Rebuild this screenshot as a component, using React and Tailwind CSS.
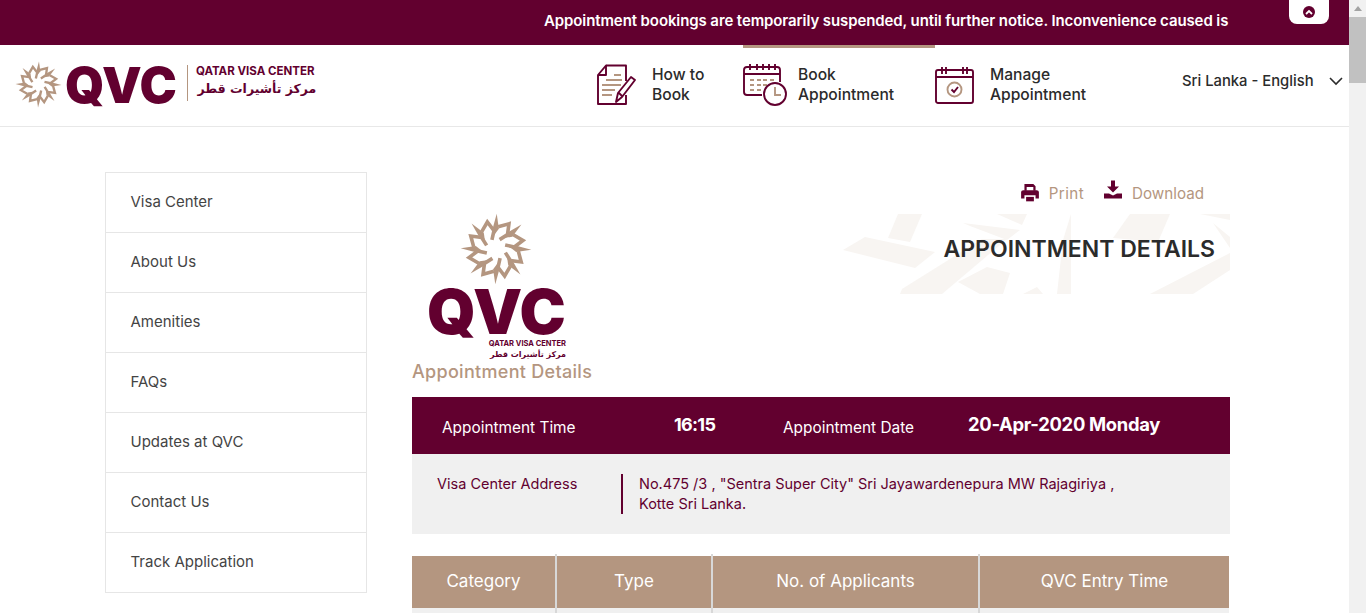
import React from "react";

const M = '"Inter","Open Sans",sans-serif';

function Star({ size }) {
  return (
    <svg width={size} height={size} viewBox="0 0 100 100" fill="none" stroke="#b49680" strokeWidth="5.500" strokeLinejoin="miter">
      {[0, 45, 90, 135, 180, 225, 270, 315].map((a) => (
        <g key={a} transform={`rotate(${a} 50 50)`}>
          <path d="M51 1 L54 22 L48 30 L45 23 Z" fill="#b49680" stroke="none" />
          <path d="M53 19 L68 15 L66 30 L55 37" strokeWidth="5" />
        </g>
      ))}
    </svg>
  );
}

function DocIcon() {
  return (
    <svg width="42" height="42" viewBox="0 0 42 42" fill="none" strokeWidth="1.900">
      <path d="M10 1.500H30V17M30 31V40H2V11L10 1.500V11H2" stroke="#62002f" strokeLinejoin="round" />
      <path d="M18 11H25M10 16H26M6 21H25M6 26H19M6 31H16" stroke="#b49680" />
      <path d="M20 38L22 29L35 13L39 16L26 33Z M23 29L27 33" stroke="#62002f" strokeLinejoin="round" />
    </svg>
  );
}
function CalClock() {
  return (
    <svg width="44" height="44" viewBox="0 0 44 44" fill="none" strokeWidth="1.900">
      <path d="M19 32H4Q1 32 1 29V7Q1 4 4 4H34Q37 4 37 7V19" stroke="#62002f" />
      <path d="M1 11H37M7 1V7M14 1V7M20 1V7M26 1V7M32 1V7" stroke="#62002f" />
      <path d="M7 17H11M14 17H18M20 17H24M27 17H31M7 22H11M14 22H18M20 22H24M7 27H11M14 27H18" stroke="#b49680" />
      <circle cx="32" cy="31" r="11" stroke="#62002f" fill="#fff" />
      <path d="M32 24V32H38" stroke="#b49680" />
    </svg>
  );
}
function CalCheck() {
  return (
    <svg width="40" height="38" viewBox="0 0 40 38" fill="none" strokeWidth="1.900">
      <rect x="1" y="4" width="37" height="33" rx="2" stroke="#62002f" />
      <path d="M1 11H38M7 1V8M11 1V8M28 1V8M32 1V8" stroke="#62002f" />
      <circle cx="19.500" cy="23.500" r="7" stroke="#b49680" />
      <path d="M16.500 23.500L19 26L23 21" stroke="#62002f" />
    </svg>
  );
}

function Nav({ icon, l1, l2, active, iconW }) {
  return (
    <div className={`flex items-center h-[76px] border-t-[3px] ${active ? "border-[#b49680]" : "border-transparent"}`}>
      <div className={`flex justify-start ${iconW}`}>{icon}</div>
      <div className="ml-[11px] text-[15.600px] leading-[20px] font-medium text-[#2b2b2b]">
        <div>{l1}</div>
        <div>{l2}</div>
      </div>
    </div>
  );
}

const side = ["Visa Center", "About Us", "Amenities", "FAQs", "Updates at QVC", "Contact Us", "Track Application"];

const cols = [
  ["Category", "w-[143px]"],
  ["Type", "w-[154px]"],
  ["No. of Applicants", "w-[265px]"],
  ["QVC Entry Time", "flex-1"],
];

export default function App() {
  return (
    <div className="h-[613px] w-[1366px] overflow-hidden flex bg-white" style={{ fontFamily: M }}>
      <div className="flex-1 min-w-0">
        <div className="h-[45px] bg-[#62002f] flex relative">
          <div className="ml-[544px] mt-[10px] text-[15px] leading-[21px] font-semibold tracking-[-0.1px] text-white whitespace-nowrap">
            Appointment bookings are temporarily suspended, until further notice. Inconvenience caused is
          </div>
          <div className="absolute right-[20px] top-0 w-[40px] h-[24px] bg-white rounded-b-[8px] flex items-center justify-center">
            <div className="w-[12px] h-[12px] rounded-full bg-[#62002f] flex items-center justify-center">
              <svg width="8" height="6" viewBox="0 0 8 6" fill="none" stroke="#fff" strokeWidth="1.800"><path d="M1 5L4 2L7 5" /></svg>
            </div>
          </div>
        </div>

        <header className="h-[82px] border-b border-[#e8e8e8] flex relative">
          <div className="ml-[15px] mt-[16px] flex items-start h-[48px]">
            <Star size={47} />
            <div className="ml-[3px] mt-[1px] text-[50px] leading-[46px] font-black text-[#62002f]">QVC</div>
            <div className="ml-[10px] mt-[4px] w-px h-[36px] bg-[#b49680]" />
            <div className="ml-[8px] text-[#62002f] w-[122px]">
              <div className="text-[11.500px] leading-[14px] mt-[3px] font-bold whitespace-nowrap">QATAR VISA CENTER</div>
              <div className="text-[12.500px] leading-[20px] mt-[1px] font-bold whitespace-nowrap text-center" style={{ fontFamily: '"DejaVu Sans",sans-serif' }}>مركز تأشيرات قطر</div>
            </div>
          </div>
          <div className="absolute left-[596px] top-0 flex">
            <div className="w-[147px]"><Nav icon={<DocIcon />} l1="How to" l2="Book" iconW="w-[45px]" /></div>
            <div className="w-[192px]"><Nav icon={<CalClock />} l1="Book" l2="Appointment" active iconW="w-[44px]" /></div>
            <div><Nav icon={<CalCheck />} l1="Manage" l2="Appointment" iconW="w-[44px]" /></div>
          </div>
          <div className="absolute left-[1182px] top-[26px] flex items-center h-[20px] text-[14.800px] font-medium text-[#2b2b2b] whitespace-nowrap">
            Sri Lanka - English
            <svg className="ml-[15px]" width="14" height="9" viewBox="0 0 14 9" fill="none" stroke="#2b2b2b" strokeWidth="1.600"><path d="M1 1L7 7L13 1" /></svg>
          </div>
        </header>

        <div className="flex pl-[105px] pt-[45px]">
          <aside className="w-[262px] h-[421px] border-x border-b border-[#e6e6e6] shrink-0">
            {side.map((s) => (
              <div key={s} className="h-[60px] flex items-center pl-[24.500px] text-[15px] text-[#444] border-t border-[#e6e6e6]">{s}</div>
            ))}
          </aside>

          <main className="ml-[45px] w-[818px]">
            <div className="h-[42px] flex items-start justify-end pr-[26px] pt-[11px] text-[15.200px] text-[#b49680]">
              <svg width="20" height="20" viewBox="0 0 18 18" fill="#62002f"><path d="M4 1H12L14 3V7H12V3.500H6V7H4Z" /><path d="M1 8Q1 6.500 3 6.500H15Q17 6.500 17 8V14H14V11H4V14H1Z" /><path d="M5.500 12.500H12.500V16.500H5.500Z" /></svg>
              <span className="ml-[9px] leading-[21px] tracking-[0.4px]">Print</span>
              <svg className="ml-[19px] -mt-[3px]" width="20" height="21" viewBox="0 0 20 20" fill="#62002f"><path d="M8 0H12V6H16L10 12L4 6H8Z" /><path d="M1 13H6L10 15L14 13H19V18H1Z" /></svg>
              <span className="ml-[9px] leading-[21px]">Download</span>
            </div>

            <div className="flex h-[183px] relative">
              <div className="w-[200px] flex flex-col items-start">
                <div className="w-[168px] flex justify-center -mt-[1px]"><Star size={72} /></div>
                <div className="ml-[15px] w-[139px] -mt-[1px] text-[#62002f]">
                  <div className="text-[62px] leading-[52px] mt-[2px] font-black whitespace-nowrap">QVC</div>
                  <div className="text-[7.500px] leading-[9px] mt-[1px] font-bold text-right whitespace-nowrap">QATAR VISA CENTER</div>
                  <div className="text-[8px] leading-[13px] font-bold text-right" style={{ fontFamily: '"DejaVu Sans",sans-serif' }}>مركز تأشيرات قطر</div>
                </div>
                <div className="text-[18px] leading-[22px] tracking-[0.3px] font-medium text-[#b49680] whitespace-nowrap">Appointment Details</div>
              </div>
              <div className="absolute left-[430px] top-0 w-[388px] h-[80px] overflow-hidden">
                <svg width="388" height="80" viewBox="0 0 388 80" fill="#f8f5f2">
                  <path d="M56 0H80L68 28L46 24Z" />
                  <path d="M1 36L23 23L93 38L73 54Z" />
                  <path d="M58 80L60 75L140 25H165L100 80Z" />
                  <path d="M116 68L145 53L168 59L161 80H138Z" />
                  <path d="M121 9L178 16L165 26L128 12Z" />
                  <path d="M155 0H185L180 11Z" />
                  <path d="M221 26L229 0V80H215Z" />
                  <path d="M195 73L181 80H201Z" />
                  <path d="M288 0H328L316 28L271 24Z" />
                  <path d="M308 80L388 39V56L351 80Z" />
                  <path d="M358 0H388V6Z" />
                  <path d="M371 9L388 23V34Z" />
                </svg>
              </div>
              <h1 className="absolute right-[15px] top-[22px] text-[23px] leading-[27px] font-semibold text-[#2b2b2b] whitespace-nowrap">APPOINTMENT DETAILS</h1>
            </div>

            <div className="h-[57px] bg-[#62002f] text-white flex items-center">
              <div className="ml-[30px] w-[232px] text-[15.400px] pt-[4px]">Appointment Time</div>
              <div className="w-[109px] text-[18px] font-bold tracking-[-0.7px] -mt-[2px]">16:15</div>
              <div className="w-[185px] text-[15.400px] pt-[4px]">Appointment Date</div>
              <div className="text-[18.400px] font-bold tracking-[-0.3px] whitespace-nowrap -mt-[2px]">20-Apr-2020 Monday</div>
            </div>

            <div className="h-[80px] bg-[#f0f0f0] flex pt-[20px] text-[14.500px] leading-[20px] text-[#62002f]">
              <div className="ml-[25px] w-[184px]">Visa Center Address</div>
              <div className="border-l-2 border-[#62002f] pl-[16px] h-[40px] w-[520px]">
                No.475 /3 , "Sentra Super City" Sri Jayawardenepura MW Rajagiriya , Kotte Sri Lanka.
              </div>
            </div>

            <div className="mt-[20px] flex h-[60px] text-white text-[17px] w-[817px]">
              {cols.map(([c, w], i) => (
                <React.Fragment key={c}>
                  {i > 0 && <div className="w-[2px] bg-[#d8d8d8]" />}
                  <div className={`${w} pt-[2px] flex flex-col`}>
                    <div className="h-[52px] bg-[#b49680] flex items-center justify-center">{c}</div>
                    <div className="flex-1 bg-[#f0f0f0]" />
                  </div>
                </React.Fragment>
              ))}
            </div>
          </main>
        </div>
      </div>

      <div className="w-[17px] shrink-0 bg-[#f1f1f1] flex flex-col items-center">
        <div className="h-[17px] flex items-center justify-center">
          <div className="w-0 h-0 border-x-[4px] border-x-transparent border-b-[5px] border-b-[#a3a3a3]" />
        </div>
        <div className="w-[17px] h-[66px] bg-[#c1c1c1]" />
      </div>
    </div>
  );
}
